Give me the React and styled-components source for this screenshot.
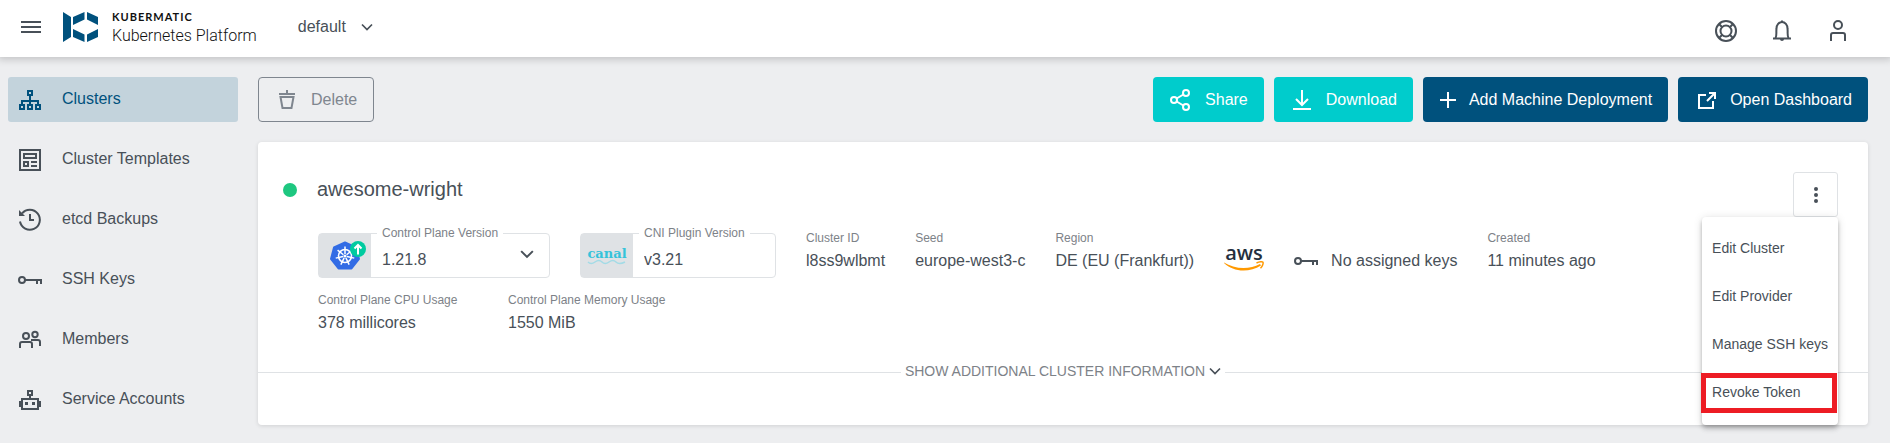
import React from 'react';
import styled, { createGlobalStyle } from 'styled-components';

const color = {
  text: '#485058',
  muted: '#7d8288',
  faded: '#7f868f',
  border: '#dfe2e5',
  page: '#edeef0',
  primary: '#00517d',
  teal: '#00cccc',
};

const GlobalStyle = createGlobalStyle`
  * { box-sizing: border-box; }
  body {
    margin: 0;
    background: ${color.page};
    color: ${color.text};
    font-family: "Liberation Sans", Arial, sans-serif;
    font-size: 16px;
    line-height: 20px;
  }
  button, select, input { font: inherit; color: inherit; }
  a { color: inherit; text-decoration: none; }
`;

const Page = styled.div`
  display: flex;
  flex-direction: column;
`;

const Header = styled.header`
  display: flex;
  align-items: flex-start;
  position: relative;
  height: 57px;
  padding: 0 40px 0 19px;
  background: #fff;
  box-shadow: 0 0 8px 2px rgba(0, 0, 0, 0.2);
`;

const IconButton = styled.button`
  display: flex;
  padding: 0;
  border: 0;
  background: none;
`;

const MenuToggle = styled(IconButton)`
  margin-top: 15px;
`;

const Brand = styled.a`
  display: flex;
  gap: 14px;
  margin: 12px 0 0 20px;
  color: #111;
`;

const BrandText = styled.span`
  display: flex;
  flex-direction: column;
`;

const BrandName = styled.span`
  font: 700 11px/12px Lato, sans-serif;
  letter-spacing: 1px;
  margin-top: -1px;
`;

const BrandProduct = styled.span`
  font: 300 16px/20px Roboto, sans-serif;
  margin-top: 3px;
`;

const SelectWrap = styled.span`
  display: flex;
  align-items: center;
  position: relative;
  flex: ${(p) => (p.$grow ? '1' : 'none')};
  color: ${color.text};
`;

const ProjectPicker = styled(SelectWrap)`
  margin: 17px 0 0 41px;
`;

const Select = styled.select`
  appearance: none;
  width: 100%;
  padding: ${(p) => (p.$field ? '0 40px 0 11px' : '0 28px 0 0')};
  border: 0;
  background: none;
  line-height: 20px;
`;

const SelectArrow = styled.span`
  display: flex;
  position: absolute;
  right: ${(p) => (p.$field ? '15px' : '2px')};
  top: ${(p) => (p.$field ? '13px' : '4px')};
  pointer-events: none;
`;

const HeaderActions = styled.div`
  display: flex;
  gap: 32px;
  margin: 19px 0 0 auto;
`;

const Body = styled.div`
  display: flex;
  align-items: flex-start;
  gap: 20px;
  padding: 20px 22px 18px 8px;
`;

const Nav = styled.nav`
  display: flex;
  flex-direction: column;
  flex: none;
  gap: 15px;
  width: 230px;
`;

const NavLink = styled.a`
  display: flex;
  gap: 20px;
  height: 45px;
  padding: 11px 10px;
  border-radius: 3px;
  line-height: 22px;
  background: ${(p) => (p.$active ? '#c3d3dc' : 'transparent')};
  color: ${(p) => (p.$active ? color.primary : color.text)};
`;

const Main = styled.main`
  display: flex;
  flex-direction: column;
  flex: 1;
  gap: 20px;
  min-width: 0;
`;

const Toolbar = styled.div`
  display: flex;
  gap: 10px;
`;

const Button = styled.button`
  display: flex;
  align-items: center;
  gap: 12px;
  height: 45px;
  padding: 0 16px;
  border: 0;
  border-radius: 4px;
  background: ${(p) => (p.$tone === 'primary' ? color.primary : color.teal)};
  color: #fff;
  white-space: nowrap;
`;

const OutlineButton = styled(Button)`
  margin-right: auto;
  border: 1px solid ${color.faded};
  background: none;
  color: ${color.faded};
`;

const Card = styled.section`
  padding: 30px 0 43px;
  border-radius: 4px;
  background: #fff;
  box-shadow: 0 1px 4px rgba(0, 0, 0, 0.12);
`;

const CardHead = styled.div`
  display: flex;
  justify-content: space-between;
  padding: 0 30px 0 25px;
`;

const Title = styled.h1`
  display: flex;
  align-items: center;
  gap: 20px;
  height: 35px;
  margin: 0;
  font-size: 20px;
  font-weight: 400;
  line-height: 24px;
`;

const TitleText = styled.span`
  padding-bottom: 2px;
`;

const StatusDot = styled.span`
  width: 14px;
  height: 14px;
  border-radius: 50%;
  background: #1ec780;
`;

const MenuAnchor = styled.div`
  position: relative;
`;

const KebabButton = styled.button`
  display: flex;
  align-items: center;
  justify-content: center;
  width: 45px;
  height: 45px;
  padding: 0;
  border: 1px solid ${color.border};
  border-radius: 3px;
  background: #fff;
`;

const Menu = styled.div`
  display: flex;
  flex-direction: column;
  position: absolute;
  z-index: 1;
  top: 100%;
  right: 0;
  padding: 8px 0;
  border-radius: 4px;
  background: #fff;
  box-shadow: 0 2px 4px -1px rgba(0, 0, 0, 0.2), 0 4px 5px rgba(0, 0, 0, 0.14),
    0 1px 10px rgba(0, 0, 0, 0.12);
`;

const MenuItem = styled.button`
  position: relative;
  height: 48px;
  padding: 0 10px 2px;
  border: 0;
  background: none;
  font-size: 14px;
  text-align: left;
  white-space: nowrap;
  &::after {
    content: "";
    display: ${(p) => (p.$marked ? 'block' : 'none')};
    position: absolute;
    inset: 4px 1px 4px -1px;
    border: 5px solid #ed1c24;
  }
`;

const Details = styled.div`
  display: flex;
  flex-wrap: wrap;
  gap: 15px 30px;
  padding: 14px 100px 0 60px;
`;

const Field = styled.div`
  display: flex;
  position: relative;
  width: ${(p) => (p.$wide ? '232px' : '196px')};
  height: 45px;
  margin-top: 2px;
  border: 1px solid ${color.border};
  border-radius: 4px;
`;

const FieldLabel = styled.label`
  position: absolute;
  top: -8px;
  left: 58px;
  padding: 0 5px;
  background: #fff;
  color: ${color.muted};
  font-size: 12px;
  line-height: 14px;
  white-space: nowrap;
`;

const FieldIcon = styled.span`
  display: flex;
  align-items: center;
  justify-content: center;
  flex: none;
  width: 52px;
  background: ${color.border};
`;

const FieldInput = styled.input`
  flex: 1;
  min-width: 0;
  padding: 8px 11px 0;
  border: 0;
  background: none;
`;

const FieldSelectWrap = styled(SelectWrap)`
  & > select { padding-top: 8px; height: 100%; }
`;

const Property = styled.div`
  display: flex;
  flex-direction: column;
  gap: 6px;
  min-width: ${(p) => (p.$wide ? '160px' : '0')};
  height: 47px;
  white-space: nowrap;
`;

const PropertyLabel = styled.span`
  color: ${color.muted};
  font-size: 12px;
  line-height: 14px;
`;

const Provider = styled.div`
  display: flex;
  padding-top: 14px;
`;

const Keys = styled.div`
  display: flex;
  gap: 13px;
  padding-top: 20px;
`;

const KeyIconSlot = styled.span`
  display: flex;
  align-items: center;
  height: 20px;
`;

const Divider = styled.div`
  display: flex;
  align-items: center;
  gap: 4px;
  margin-top: 22px;
  &::before, &::after {
    content: "";
    flex: 1;
    height: 1px;
    background: ${color.border};
  }
`;

const Expand = styled.button`
  display: flex;
  align-items: center;
  gap: 4px;
  height: 20px;
  padding: 0 0 2px;
  border: 0;
  background: none;
  color: ${color.muted};
  font-size: 14px;
  line-height: 18px;
`;

const Svg = styled.svg`
  flex: none;
  overflow: visible;
  fill: none;
  stroke: currentColor;
  stroke-width: 2;
`;

const Icon = ({ size = 24, width = size, box = `0 0 ${width} ${size}`, children, ...rest }) => (
  <Svg width={width} height={size} viewBox={box} aria-hidden="true" {...rest}>
    {children}
  </Svg>
);

const Chevron = ({ size = 12 }) => (
  <Icon size={size} box="0 0 12 12" color={color.text}>
    <path d="M1 3.500l5 5 5-5" strokeWidth="1.700" />
  </Icon>
);

const KeyShape = () => (
  <>
    <circle cx="4" cy="12" r="3" />
    <path d="M7 12h16v4M19 12v4" />
  </>
);

const navItems = [
  {
    label: 'Clusters',
    active: true,
    icon: (
      <>
        <path d="M12 8v8M4 16v-3h16v3" />
        <path d="M10 3h4v4h-4zM2 17h4v4H2zM10 17h4v4h-4zM18 17h4v4h-4z" />
      </>
    ),
  },
  {
    label: 'Cluster Templates',
    icon: <path d="M2 2h20v20H2zM6 6h12v4H6zM6 14h4v4H6zM13 14h6M13 18h6" />,
  },
  {
    label: 'etcd Backups',
    icon: (
      <>
        <path d="M2 13.5A10 10 0 1 0 4 5.5" />
        <path d="M12 6v6h4" />
        <path d="M1 2v6h6z" fill="currentColor" stroke="none" />
      </>
    ),
  },
  { label: 'SSH Keys', icon: <KeyShape /> },
  {
    label: 'Members',
    icon: (
      <>
        <circle cx="8" cy="8" r="3" />
        <circle cx="17" cy="6.5" r="2.7" />
        <path d="M2 20v-4a2 2 0 0 1 2-2h8a2 2 0 0 1 2 2v4M13 12h7a2 2 0 0 1 2 2v4" />
      </>
    ),
  },
  {
    label: 'Service Accounts',
    icon: (
      <>
        <path d="M4 11h16v10H4zM10 3h4v4h-4zM12 7v4M2 13v6M22 13v6" />
        <path d="M7 14h3v3H7zM14 14h3v3h-3z" fill="currentColor" stroke="none" />
      </>
    ),
  },
];

const Logo = () => (
  <Svg width="35" height="30" viewBox="0 0 35 30" aria-hidden="true">
    <path
      fill={color.primary}
      stroke="none"
      d="M0 0l8 5v20l-8 5zM10 5l11.500-5v7.500L10 13zM24 0l11 5v8L24 7.500zM10 17l11.500 5.500V30L10 25zM24 22.500L35 17v8l-11 5z"
    />
  </Svg>
);

const spokes = [0, 1, 2, 3, 4, 5, 6].map((n) => (n * 360) / 7);

const KubernetesIcon = () => (
  <Svg width="42" height="30" viewBox="-6 0 42 30" aria-hidden="true">
    <path
      d="M15 1.500L26 6.500 29 18 21.500 27.500H8.500L1 18 4 6.500z"
      fill="#326ce5"
      stroke="#326ce5"
      strokeLinejoin="round"
    />
    <g stroke="#fff" strokeWidth="1.500">
      <circle cx="15" cy="15" r="6.500" />
      {spokes.map((angle) => (
        <path key={angle} d="M15 13v-7.500" transform={`rotate(${angle} 15 15)`} />
      ))}
    </g>
    <circle cx="15" cy="15" r="1.600" fill="#fff" stroke="none" />
    <circle cx="28" cy="8" r="8" fill="#00cba0" stroke="none" />
    <path d="M28 13.500V4M24.500 7.500L28 4l3.500 3.500" stroke="#fff" />
  </Svg>
);

const CanalLogo = () => (
  <Svg width="42" height="24" viewBox="0 0 42 24" role="img" aria-label="canal">
    <text x="21" y="14" textAnchor="middle" fontFamily="DejaVu Serif, serif" fontWeight="700" fontSize="13" fill="#35c3da" stroke="none">
      canal
    </text>
    <path d="M2 18q3 3 7 0t7 0 7 0 7 0 9 0" stroke="#a3dbe6" strokeWidth="1.500" />
  </Svg>
);

const AwsLogo = () => (
  <Svg width="40" height="28" viewBox="0 0 40 28" role="img" aria-label="aws">
    <text x="20" y="15" textAnchor="middle" fontFamily="Open Sans, sans-serif" fontWeight="600" fontSize="20" fill="#252f3e" stroke="none">
      aws
    </text>
    <path d="M0 17.500c10 6.500 25 7.500 36 1.500l1 1.500C25 28 9 27 0 18z" fill="#f90" stroke="none" />
    <path d="M32.500 18c3-1.500 6-1.500 6.500-.800s-.3 4-2.500 6" stroke="#f90" strokeWidth="1.500" />
  </Svg>
);

const properties = [
  ['Cluster ID', 'l8ss9wlbmt'],
  ['Seed', 'europe-west3-c'],
  ['Region', 'DE (EU (Frankfurt))'],
];

const usage = [
  ['Control Plane CPU Usage', '378 millicores'],
  ['Control Plane Memory Usage', '1550 MiB'],
];

const menuItems = ['Edit Cluster', 'Edit Provider', 'Manage SSH keys', 'Revoke Token'];

const Info = ({ label, value, wide }) => (
  <Property $wide={wide}>
    <PropertyLabel>{label}</PropertyLabel>
    <span>{value}</span>
  </Property>
);

export default function App() {
  return (
    <Page>
      <GlobalStyle />
      <Header>
        <MenuToggle aria-label="Toggle navigation">
          <Icon>
            <path d="M2 7h20M2 12h20M2 17h20" />
          </Icon>
        </MenuToggle>
        <Brand href="#">
          <Logo />
          <BrandText>
            <BrandName>KUBERMATIC</BrandName>
            <BrandProduct>Kubernetes Platform</BrandProduct>
          </BrandText>
        </Brand>
        <ProjectPicker>
          <Select aria-label="Project" defaultValue="default">
            <option>default</option>
          </Select>
          <SelectArrow>
            <Chevron />
          </SelectArrow>
        </ProjectPicker>
        <HeaderActions>
          <IconButton aria-label="Support">
            <Icon>
              <circle cx="12" cy="12" r="10" />
              <circle cx="12" cy="12" r="5.500" />
              <path d="M5 5l3.500 3.500M19 5l-3.500 3.500M5 19l3.500-3.500M19 19l-3.500-3.500" />
            </Icon>
          </IconButton>
          <IconButton aria-label="Notifications">
            <Icon>
              <path d="M3 19.500h18M5.500 19c1.500-2 .5-6 1-9.500a5.500 6.500 0 0 1 11 0c.5 3.500-.5 7.500 1 9.500" />
              <path d="M10 20h4a2 2 0 0 1-4 0zM11 1.500h2v2h-2z" fill="currentColor" stroke="none" />
            </Icon>
          </IconButton>
          <IconButton aria-label="Account">
            <Icon>
              <circle cx="12" cy="6" r="4" />
              <path d="M5 22v-6a2 2 0 0 1 2-2h10a2 2 0 0 1 2 2v6" />
            </Icon>
          </IconButton>
        </HeaderActions>
      </Header>

      <Body>
        <Nav>
          {navItems.map((item) => (
            <NavLink key={item.label} href="#" $active={item.active}>
              <Icon>{item.icon}</Icon>
              <span>{item.label}</span>
            </NavLink>
          ))}
        </Nav>

        <Main>
          <Toolbar>
            <OutlineButton>
              <Icon>
                <path d="M4 6h16M12 2v4M5.500 9h13L16.500 20h-9z" />
              </Icon>
              Delete
            </OutlineButton>
            <Button>
              <Icon>
                <circle cx="5" cy="12" r="3" />
                <circle cx="17" cy="5" r="3" />
                <circle cx="17" cy="19" r="3" />
                <path d="M7.600 10.500l6.800-4M7.600 13.500l6.800 4" />
              </Icon>
              Share
            </Button>
            <Button>
              <Icon>
                <path d="M12 2v15M6 11l6 6 6-6M3 21h18" />
              </Icon>
              Download
            </Button>
            <Button $tone="primary">
              <Icon size={18}>
                <path d="M9 1v16M1 9h16" />
              </Icon>
              Add Machine Deployment
            </Button>
            <Button $tone="primary">
              <Icon>
                <path d="M12 7H5v13h14v-7M13 13l7-7M15 5h6v6" />
              </Icon>
              Open Dashboard
            </Button>
          </Toolbar>

          <Card>
            <CardHead>
              <Title>
                <StatusDot />
                <TitleText>awesome-wright</TitleText>
              </Title>
              <MenuAnchor>
                <KebabButton aria-label="Cluster actions">
                  <Icon>
                    <g fill="currentColor" stroke="none">
                      <circle cx="12" cy="6" r="2" />
                      <circle cx="12" cy="12" r="2" />
                      <circle cx="12" cy="18" r="2" />
                    </g>
                  </Icon>
                </KebabButton>
                <Menu>
                  {menuItems.map((label) => (
                    <MenuItem key={label} $marked={label === 'Revoke Token'}>
                      {label}
                    </MenuItem>
                  ))}
                </Menu>
              </MenuAnchor>
            </CardHead>

            <Details>
              <Field $wide>
                <FieldIcon>
                  <KubernetesIcon />
                </FieldIcon>
                <FieldSelectWrap $grow>
                  <Select id="control-plane" $field defaultValue="1.21.8">
                    <option>1.21.8</option>
                  </Select>
                  <SelectArrow $field>
                    <Chevron size={14} />
                  </SelectArrow>
                </FieldSelectWrap>
                <FieldLabel htmlFor="control-plane">Control Plane Version</FieldLabel>
              </Field>
              <Field>
                <FieldIcon>
                  <CanalLogo />
                </FieldIcon>
                <FieldInput id="cni-plugin" readOnly value="v3.21" />
                <FieldLabel htmlFor="cni-plugin">CNI Plugin Version</FieldLabel>
              </Field>
              {properties.map(([label, value]) => (
                <Info key={label} label={label} value={value} />
              ))}
              <Provider>
                <AwsLogo />
              </Provider>
              <Keys>
                <KeyIconSlot>
                  <Icon>
                    <KeyShape />
                  </Icon>
                </KeyIconSlot>
                <span>No assigned keys</span>
              </Keys>
              <Info label="Created" value="11 minutes ago" />
              {usage.map(([label, value]) => (
                <Info key={label} label={label} value={value} wide />
              ))}
            </Details>

            <Divider>
              <Expand>
                SHOW ADDITIONAL CLUSTER INFORMATION
                <Chevron />
              </Expand>
            </Divider>
          </Card>
        </Main>
      </Body>
    </Page>
  );
}
